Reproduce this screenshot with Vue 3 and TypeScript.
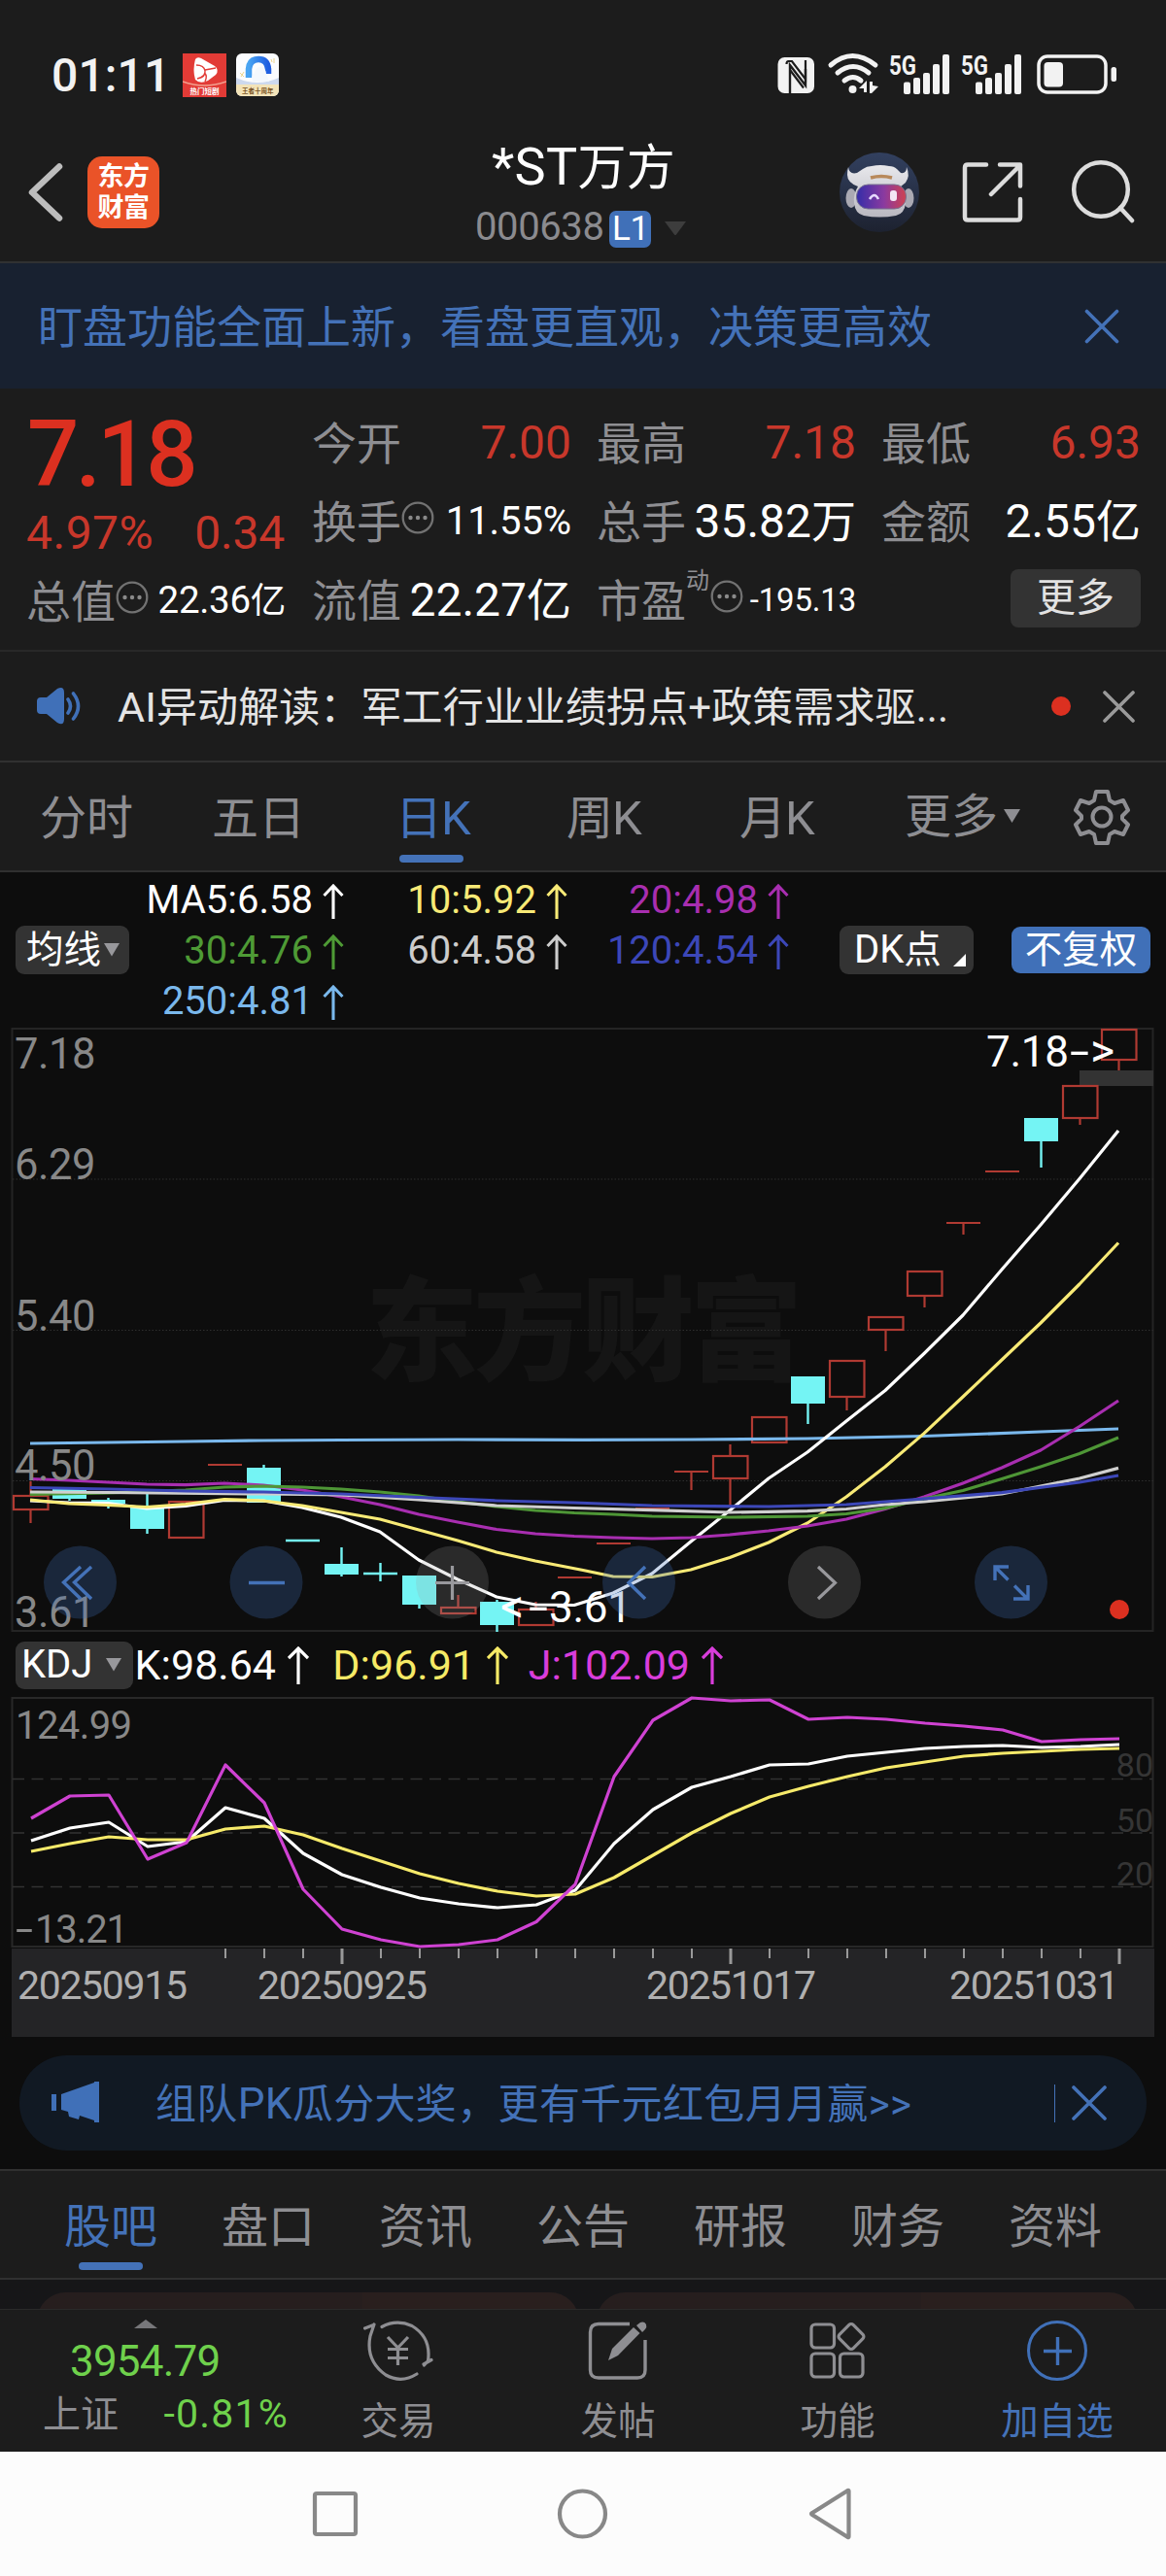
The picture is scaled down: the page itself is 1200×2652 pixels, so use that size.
<script setup lang="ts">
interface Candle {
  x: number
  kind: 'up' | 'down'
  top: number
  bottom: number
  high: number
  low: number
}

// open/close box and high/low wick per session, in chart units
const sessions: ['u' | 'd', number, number, number, number][] = [
  ['u', 1540, 1554, 1525, 1568],
  ['d', 1533, 1543, 1533, 1545],
  ['d', 1544, 1548, 1542, 1553],
  ['d', 1551, 1574, 1538, 1579],
  ['u', 1546, 1583, 1546, 1583],
  ['u', 1508, 1508, 1508, 1508],
  ['d', 1511, 1547, 1508, 1547],
  ['d', 1586, 1586, 1586, 1586],
  ['d', 1610, 1621, 1593, 1623],
  ['d', 1620, 1620, 1609, 1628],
  ['d', 1622, 1652, 1622, 1656],
  ['u', 1655, 1661, 1642, 1661],
  ['d', 1649, 1673, 1647, 1680],
  ['u', 1657, 1673, 1649, 1673],
  ['u', 1624, 1624, 1624, 1624],
  ['u', 1589, 1589, 1589, 1589],
  ['u', 1553, 1553, 1553, 1553],
  ['u', 1515, 1515, 1515, 1534],
  ['u', 1499, 1522, 1487, 1551],
  ['u', 1459, 1485, 1459, 1485],
  ['d', 1417, 1445, 1417, 1466],
  ['u', 1401, 1438, 1401, 1452],
  ['u', 1356, 1369, 1356, 1391],
  ['u', 1309, 1334, 1309, 1346],
  ['u', 1259, 1259, 1259, 1271],
  ['u', 1206, 1206, 1206, 1206],
  ['d', 1151, 1175, 1151, 1202],
  ['u', 1118, 1151, 1118, 1158],
  ['u', 1060, 1091, 1060, 1102],
]
const candles: Candle[] = sessions.map(([k, top, bottom, high, low], i) => ({
  x: 31.5 + i * 40,
  kind: k === 'u' ? 'up' : 'down',
  top,
  bottom,
  high,
  low,
}))

const maLines: { color: string; points: string }[] = [
  { color: '#7ab8ec', points: '31,1486 111,1485 191,1484 271,1483 351,1482.5 471,1482 600,1482.3 711,1482 831,1481 951,1478.5 1071,1474 1151,1471' },
  { color: '#ffffff', points: '31,1545 71,1547 111,1547.5 151,1553 191,1550.5 231,1544.5 271,1545 311,1552 351,1562 391,1577 431,1606 471,1626 511,1644 551,1652 591,1652.5 631,1640 671,1620 711,1587 751,1555 791,1522 831,1495 871,1463 911,1431.5 951,1393.5 991,1354 1031,1307 1071,1261 1111,1213.5 1151,1164' },
  { color: '#f8ea76', points: '31,1544 71,1548 111,1549.5 151,1551.5 191,1548.5 231,1543.5 271,1545 311,1550 351,1557 391,1564 431,1575 471,1586 511,1598 551,1607 600,1616.5 631,1623 671,1623.5 711,1616 751,1603.5 791,1588 831,1568 871,1541 911,1510 951,1475.6 991,1438 1031,1400 1071,1362 1111,1322 1151,1279.5' },
  { color: '#a82eb0', points: '31,1522.5 71,1524 111,1526 151,1528 191,1528.7 231,1527 271,1529 311,1534 351,1541 391,1549 431,1559 471,1567 511,1574.5 551,1579 591,1581.5 631,1583 671,1584 711,1583 751,1580 791,1576 831,1571 871,1564 911,1553.5 951,1541 991,1527 1031,1511 1071,1493 1111,1468.5 1151,1442' },
  { color: '#4e9636', points: '31,1538.5 111,1537 191,1534 231,1531 271,1530 311,1531 351,1533 391,1536 431,1540 471,1546 511,1551 551,1555 591,1557.5 631,1559 671,1561 751,1562 831,1561 871,1558.5 911,1552.6 951,1543 991,1534.5 1031,1522.5 1071,1510 1111,1496.6 1151,1480' },
  { color: '#cfcfcf', points: '31,1536 111,1536.5 271,1538 351,1539 431,1544 511,1550 591,1552.5 671,1554.7 751,1557 831,1555.6 871,1553.5 911,1549 951,1546 1031,1538 1111,1522 1151,1511.4' },
  { color: '#3c47b8', points: '31,1531.5 111,1533 191,1535 271,1536 351,1538 431,1541.5 511,1545 591,1547 671,1550 791,1551 871,1549 951,1543 1031,1536.6 1111,1526 1151,1519' },
]

const toPoints = (ys: number[]) => ys.map((y, i) => `${32 + i * 40},${y}`).join(' ')
const kLine = toPoints([1895, 1882, 1876, 1901, 1896, 1861, 1872, 1908, 1930, 1943, 1954, 1960, 1964, 1961, 1946, 1898, 1863, 1840, 1829, 1817, 1816, 1808, 1804, 1800, 1798, 1797, 1799, 1798, 1796])
const dLine = toPoints([1906, 1898, 1891, 1894, 1894, 1883, 1880, 1889, 1903, 1916, 1929, 1939, 1947, 1952, 1950, 1933, 1910, 1887, 1867, 1850, 1839, 1829, 1820, 1814, 1808, 1805, 1803, 1801, 1800])
const jLine = toPoints([1872, 1849, 1848, 1914, 1897, 1817, 1856, 1945, 1986, 1997, 2004, 2002, 1997, 1978.5, 1940, 1829, 1771, 1748, 1751, 1750, 1770, 1768, 1770, 1774, 1777, 1781, 1793, 1791, 1790])

const ticks = Array.from({ length: 24 }, (_, i) => ({ x: 232 + i * 40, major: (i + 5) % 10 === 8 }))
const priceLabels = [
  { t: '7.18', y: 1100 },
  { t: '6.29', y: 1214 },
  { t: '5.40', y: 1370 },
  { t: '4.50', y: 1524 },
  { t: '3.61', y: 1675 },
]
const dates = [
  { t: '20250915', x: 18 },
  { t: '20250925', x: 265 },
  { t: '20251017', x: 665 },
  { t: '20251031', x: 977 },
]
const maValues = [
  { t: 'MA5:6.58', c: '#ffffff' },
  { t: '10:5.92', c: '#f8ea76' },
  { t: '20:4.98', c: '#a82eb0' },
  { t: '30:4.76', c: '#4e9a35' },
  { t: '60:4.58', c: '#cccccc' },
  { t: '120:4.54', c: '#3c47b8' },
  { t: '250:4.81', c: '#7ab8ec' },
]
const kdj = [
  { t: 'K:98.64', c: '#ffffff', w: 178 },
  { t: 'D:96.91', c: '#f6ea66', w: 182 },
  { t: 'J:102.09', c: '#d93ddb', w: 198 },
]
const infoTabs = ['股吧', '盘口', '资讯', '公告', '研报', '财务', '资料']
</script>

<template>
  <div class="screen">
    <div class="status">
      <span class="time">01:11</span>
      <svg class="app1" width="45" height="45" viewBox="0 0 45 45">
        <rect width="45" height="45" fill="#e23b36" />
        <path d="M13 6q2-3 6-1l14 8q5 4 1 9l-8 6q-8 4-13-1-3-10 0-21z" fill="#fff" />
        <path d="M14 12q8 0 9 6t-8 8M23 17l11-2M22 20q4 2 1 9" fill="none" stroke="#e23b36" stroke-width="1.4" />
        <path d="M0 29q22 8 45 0" fill="none" stroke="#f3a08e" stroke-width="1.4" />
        <text x="7.5" y="42" font-size="7.5" fill="#fff" font-weight="700">热门短剧</text>
      </svg>
      <svg class="app2" width="44" height="44" viewBox="0 0 44 44">
        <defs>
          <linearGradient id="arch" x1="0" x2="1"><stop offset="0" stop-color="#48a4f2" /><stop offset="1" stop-color="#1f5ee0" /></linearGradient>
          <clipPath id="r2"><rect width="44" height="44" rx="6" /></clipPath>
        </defs>
        <g clip-path="url(#r2)">
          <rect width="44" height="44" fill="#fbfcfe" />
          <path d="M0 25q22 10 44 0v8H0z" fill="#cdd9ee" />
          <rect y="32" width="44" height="12" fill="#f3e3b8" />
          <path d="M13 25v-9q1-10 10-10t10 10v5" fill="none" stroke="url(#arch)" stroke-width="6.5" />
          <path d="M17 29q-2-7 2-9 1-7 7-6 5 2 5 7l3 8z" fill="#f4f8fd" />
          <path d="M36 6l1 3M39 5v5M4 20l4 4M8 19l-3 5" stroke="#ecd58e" stroke-width="1" />
          <text x="6" y="40.500" font-size="6.500" fill="#7a5426" font-weight="700">王者十周年</text>
        </g>
      </svg>
      <svg class="sys" width="360" height="58" viewBox="796 44 360 58">
        <g fill="#f2f2f2">
          <rect x="800.500" y="59" width="37.500" height="37" rx="7" />
          <path d="M813 96V67l16 21V71" fill="none" stroke="#1c1c1c" stroke-width="2.400" />
          <path d="M809.500 92V63.500M825.500 59v9" fill="none" stroke="#1c1c1c" stroke-width="0" />
          <path d="M813 72l14 18.500M809.500 66q0-3 2-3l3.500 0 14 18.500V62" fill="none" stroke="#1c1c1c" stroke-width="2.200" />
          <path d="M855 67q22-19 46 0M862 75q16-13 32 0M869 83q9-7 17 0" fill="none" stroke="#f2f2f2" stroke-width="5" stroke-linecap="round" />
          <circle cx="877.500" cy="92" r="4" />
          <path d="M884 91l8-8v12h-3v-4zM895 84h3v4l6 1-7 7h-2z" />
          <g v-for="dx in [0, 74]" :key="dx" :transform="`translate(${dx} 0)`">
            <text x="915" y="77" font-size="27" font-weight="700" textLength="28" lengthAdjust="spacingAndGlyphs" class="num">5G</text>
            <rect x="930" y="84.500" width="7" height="12.500" rx="2" />
            <rect x="940" y="80" width="7" height="17" rx="2" />
            <rect x="950" y="75" width="7" height="22" rx="2" />
            <rect x="960" y="66" width="7" height="31" rx="2" />
            <rect x="970" y="56" width="7" height="41" rx="2" />
          </g>
          <rect x="1069" y="58" width="69" height="37" rx="9" fill="none" stroke="#f2f2f2" stroke-width="3.500" />
          <rect x="1074.500" y="64" width="19.500" height="25.500" rx="4" />
          <rect x="1143.500" y="69" width="5.500" height="15" rx="2.500" />
        </g>
      </svg>
    </div>

    <header class="header">
      <svg class="back" width="40" height="64" viewBox="26 166 40 64"><path d="M61 171.500L33 198l28 26.500" fill="none" stroke="#bdbdbd" stroke-width="6.500" stroke-linecap="round" stroke-linejoin="round" /></svg>
      <div class="logo"><span>东方</span><span>财富</span></div>
      <div class="title">
        <div class="name">*ST<span>万方</span></div>
        <div class="code">000638<b>L1</b><svg width="24" height="16" viewBox="0 0 24 16"><path d="M1 1h22L13 14.500q-1 1-2 0z" fill="#3d3d3d" /></svg></div>
      </div>
      <svg class="robot" width="82" height="82" viewBox="0 0 82 82">
        <defs>
          <linearGradient id="sky" x1="0" y1="0" x2="0" y2="1"><stop offset="0" stop-color="#32405f" /><stop offset="1" stop-color="#1d2230" /></linearGradient>
          <linearGradient id="visor" x1="0" x2="1"><stop offset="0" stop-color="#352da8" /><stop offset=".55" stop-color="#8a3aa0" /><stop offset="1" stop-color="#cf4250" /></linearGradient>
          <linearGradient id="shell" x1="0" y1="0" x2="0" y2="1"><stop offset="0" stop-color="#e8e8ec" /><stop offset="1" stop-color="#b9b8c0" /></linearGradient>
        </defs>
        <circle cx="41" cy="41" r="41" fill="url(#sky)" />
        <ellipse cx="12" cy="47" rx="5.500" ry="10" fill="#aaa9b3" /><ellipse cx="71" cy="47" rx="5.500" ry="10" fill="#aaa9b3" />
        <path d="M9 15q1 8 9 6l6-4q4-3 9-3 9-2 18 0 5 0 8 3l4 4q6 1 6-6 4 9-1 16l-5 4q6 8 5 17-1 11-10 13-17 3-33 0-9-2-10-13-1-9 4-17-11-4-11-12 0-4 1-8z" fill="url(#shell)" />
        <path d="M32 26q11-3 22 0" stroke="#b8895c" stroke-width="3.500" fill="none" />
        <rect x="17.500" y="33" width="51" height="25" rx="12" fill="url(#visor)" stroke="#77718f" />
        <path d="M31 48q5-8 9 0" fill="none" stroke="#e7d9ff" stroke-width="2.500" /><rect x="52" y="39" width="7" height="11" rx="3" fill="#f3e7f5" />
      </svg>
      <svg class="share" width="64" height="64" viewBox="990 166 64 64"><path d="M1015 169.500h-19q-3 0-3 3v51q0 3 3 3h51q3 0 3-3v-18.500M1029 169.500h21v22M1049 171l-29 29" fill="none" stroke="#dcdcdc" stroke-width="4.500" stroke-linecap="round" stroke-linejoin="round" /></svg>
      <svg class="search" width="66" height="66" viewBox="1102 164 66 66"><circle cx="1133" cy="195" r="27.800" fill="none" stroke="#dcdcdc" stroke-width="4.500" /><path d="M1153 214l12 13" stroke="#dcdcdc" stroke-width="4.500" stroke-linecap="round" /></svg>
    </header>

    <div class="notice">
      <span>盯盘功能全面上新，看盘更直观，决策更高效</span>
      <svg width="36" height="36" viewBox="0 0 36 36"><path d="M2.500 2.500l31 31M33.500 2.500l-31 31" stroke="#4472b8" stroke-width="3.600" stroke-linecap="round" /></svg>
    </div>

    <section class="quote">
      <div class="col first">
        <div class="price">7.18</div>
        <div class="pct"><span>4.97%</span><span>0.34</span></div>
        <div class="cell"><label>总值</label><svg class="dots"><use href="#dots" /></svg><span class="v mid cap">22.36<i>亿</i></span></div>
      </div>
      <div class="col">
        <div class="cell"><label>今开</label><span class="v red">7.00</span></div>
        <div class="cell"><label>换手</label><svg class="dots"><use href="#dots" /></svg><span class="v mid">11.55%</span></div>
        <div class="cell"><label>流值</label><span class="v">22.27<i>亿</i></span></div>
      </div>
      <div class="col">
        <div class="cell"><label>最高</label><span class="v red">7.18</span></div>
        <div class="cell"><label>总手</label><span class="v">35.82<i>万</i></span></div>
        <div class="cell"><label>市盈</label><sup>动</sup><svg class="dots"><use href="#dots" /></svg><span class="v small">-195.13</span></div>
      </div>
      <div class="col">
        <div class="cell"><label>最低</label><span class="v red">6.93</span></div>
        <div class="cell"><label>金额</label><span class="v">2.55<i>亿</i></span></div>
        <div class="cell"><button class="more">更多</button></div>
      </div>
      <svg width="0" height="0" class="defs"><symbol id="dots" viewBox="0 0 34 34"><circle cx="17" cy="17" r="15.300" fill="none" stroke="#727272" stroke-width="2.300" /><g fill="#8a8a8a"><circle cx="9.500" cy="17" r="2.200" /><circle cx="17" cy="17" r="2.200" /><circle cx="24.500" cy="17" r="2.200" /></g></symbol></svg>
    </section>

    <div class="ai">
      <svg width="48" height="40" viewBox="36 707 48 40"><path d="M38 722q0-4 4-4h6l11-9q7-3 7 4v27q0 8-7 4l-11-9h-6q-4 0-4-4z" fill="#4070b8" /><path d="M70 720q5 7 0 14M75.500 714q10 13 0 26" fill="none" stroke="#4070b8" stroke-width="3.600" stroke-linecap="round" /></svg>
      <p><span class="lat">AI</span>异动解读：军工行业业绩拐点+政策需求驱...</p>
      <i class="dot"></i>
      <svg width="33" height="33" viewBox="0 0 33 33"><path d="M2 2l29 29M31 2L2 31" stroke="#9a9a9a" stroke-width="3.600" stroke-linecap="round" /></svg>
    </div>

    <nav class="periods">
      <span class="p1">分时</span><span class="p2">五日</span><span class="p3 on">日<em>K</em></span><span class="p4">周<em>K</em></span><span class="p5">月<em>K</em></span><span class="p6">更多<svg width="18" height="15" viewBox="0 0 18 15"><path d="M0 0h17L8.500 14z" fill="#8e8e92" /></svg></span>
      <svg class="gear" width="58" height="58" viewBox="0 0 58 58">
        <g fill="none" stroke="#8e8e92" stroke-width="4"><path d="M23 3h12l2 9 5 3 9-3 5 10-6 6v3l6 6-5 10-9-3-5 3-2 9H23l-2-9-5-3-9 3-5-10 6-6v-3l-6-6 5-10 9 3 5-3z" stroke-linejoin="round" /><circle cx="29" cy="29" r="9.500" /></g>
      </svg>
    </nav>

    <section class="chart">
      <div class="legend">
        <button class="pill ma">均线<svg width="16" height="14" viewBox="0 0 16 14"><path d="M0 0h16L8 13.500z" fill="#98989c" /></svg></button>
        <div class="values">
          <span v-for="m in maValues" :key="m.t" :style="{ color: m.c }">{{ m.t }}<svg width="22" height="37" viewBox="0 0 22 37"><path d="M11 36V2M1.500 12L11 2l9.500 10" fill="none" stroke="currentColor" stroke-width="3.100" /></svg></span>
        </div>
        <button class="pill dk"><span>DK</span>点<svg width="13" height="13" viewBox="0 0 13 13"><path d="M13 0v13H0z" fill="#fff" /></svg></button>
        <button class="pill adj">不复权</button>
      </div>

      <svg class="kline" width="1200" height="626" viewBox="0 1057 1200 626">
        <text x="376" y="1412" font-size="116" font-weight="900" fill="#151515" textLength="450">东方财富</text>
        <rect x="12.500" y="1059" width="1174" height="620" fill="none" stroke="#242424" stroke-width="2" />
        <g stroke="#2e2e2e" stroke-width="1" stroke-dasharray="1.500 2"><path d="M13 1214h1174M13 1369.500h1174M13 1524.500h1174" /></g>
        <rect x="1111" y="1102" width="76" height="16" fill="#333" />
        <g v-for="c in candles" :key="c.x" :class="c.kind">
          <template v-if="c.bottom === c.top">
            <path class="wick" :d="`M${c.x - 17.5} ${c.top}h35M${c.x} ${c.high}V${c.low}`" />
          </template>
          <template v-else>
            <path class="wick" :d="`M${c.x} ${c.high}V${c.top}M${c.x} ${c.bottom}V${c.low}`" />
            <rect v-if="c.kind === 'up'" :x="c.x - 17.5" :y="c.top" width="35.500" :height="c.bottom - c.top" />
            <rect v-else :x="c.x - 17.5" :y="c.top" width="35" :height="c.bottom - c.top" />
          </template>
        </g>
        <polyline v-for="l in maLines" :key="l.color" :points="l.points" :stroke="l.color" fill="none" stroke-width="3.200" stroke-linejoin="round" />
        <text v-for="p in priceLabels" :key="p.t" x="15" :y="p.y" class="num" font-size="43.500" fill="#888" textLength="83.500">{{ p.t }}</text>
        <text y="1098" class="num" font-size="44" fill="#fff"><tspan x="1015" textLength="85">7.18</tspan><tspan x="1101" textLength="20" lengthAdjust="spacingAndGlyphs">-</tspan><tspan x="1122" font-size="48">&gt;</tspan></text>
        <text y="1670" class="num" font-size="44" fill="#fff"><tspan x="515" font-size="48">&lt;</tspan><tspan x="544" textLength="20" lengthAdjust="spacingAndGlyphs">-</tspan><tspan x="565" textLength="85">3.61</tspan></text>
        <g fill="rgba(64,112,184,.27)"><circle cx="82.500" cy="1629" r="37.500" /><circle cx="274" cy="1629" r="37.500" /><circle cx="657.500" cy="1629" r="37.500" /><circle cx="1040.500" cy="1629" r="37.500" /></g>
        <g fill="rgba(160,160,160,.2)"><circle cx="465.500" cy="1629" r="37.500" /><circle cx="848.500" cy="1629" r="37.500" /></g>
        <g fill="none" stroke="#4472b8" stroke-width="3.400"><path d="M83 1613l-17.500 16L83 1646M94 1613l-17.500 16L94 1646M256 1629.500h37M664 1613l-17 16.500 17 16.500" /><path d="M1024 1627v-14h14M1024 1613l13.500 13.500M1058 1632v14h-15M1057 1645.500l-13-13" /></g>
        <g fill="none" stroke="#98989c" stroke-width="3.200"><path d="M448 1629.500h35M465.500 1612v35M842 1613l17.500 16.500L842 1646" /></g>
        <circle cx="1152" cy="1657" r="10" fill="#dc3020" />
      </svg>

      <div class="kdj">
        <button class="pill kd"><span>KDJ</span><svg width="16" height="14" viewBox="0 0 16 14"><path d="M0 0h16L8 13.500z" fill="#98989c" /></svg></button>
        <span v-for="k in kdj" :key="k.t" class="kv" :style="{ color: k.c, width: k.w + 'px' }">{{ k.t }}<svg width="22" height="39" viewBox="0 0 22 39"><path d="M11 39V2M1 12L11 2l10 10" fill="none" stroke="currentColor" stroke-width="3.200" /></svg></span>
      </div>

      <svg class="osc" width="1200" height="354" viewBox="0 1745 1200 354">
        <rect x="12" y="2006" width="1176" height="91" fill="#242426" />
        <rect x="12.500" y="1748" width="1174" height="256" fill="none" stroke="#282828" stroke-width="2" />
        <g stroke="#333" stroke-width="1.300" stroke-dasharray="12 7.500"><path d="M13 1831.500h1173M13 1887h1173M13 1942.500h1173" /></g>
        <g class="num" font-size="34" fill="#353535" text-anchor="end"><text x="1187" y="1829">80</text><text x="1187" y="1885.500">50</text><text x="1187" y="1941">20</text></g>
        <g class="num" font-size="40" fill="#888"><text x="16" y="1789.500" textLength="120">124.99</text><text y="1999.500"><tspan x="16" textLength="18" lengthAdjust="spacingAndGlyphs">-</tspan><tspan x="36" textLength="96">13.21</tspan></text></g>
        <g fill="none" stroke-width="3.200" stroke-linejoin="round">
          <polyline :points="kLine" stroke="#fff" /><polyline :points="dLine" stroke="#f6ea6a" /><polyline :points="jLine" stroke="#cf42d2" />
        </g>
        <rect v-for="t in ticks" :key="t.x" :x="t.x - (t.major ? 1.5 : 1)" y="2006" :width="t.major ? 3 : 2" :height="t.major ? 16 : 10" fill="#999" />
        <text v-for="d in dates" :key="d.t" :x="d.x" y="2057.500" class="num" font-size="41" fill="#b0b0b0" textLength="175">{{ d.t }}</text>
      </svg>

      <div class="promo">
        <svg class="horn" width="50" height="46" viewBox="53 2143 50 46"><path d="M53 2157h5v17h-5zM63 2157l34-12v-1h5v42h-5v-2l-15-5-1 4-10-3-1-5-7-2z" fill="#4070b8" /></svg>
        <p>组队<span>PK</span>瓜分大奖，更有千元红包月月赢&gt;&gt;</p>
        <i></i>
        <svg class="x" width="36" height="36" viewBox="0 0 36 36"><path d="M2 2l32 32M34 2L2 34" stroke="#4472b8" stroke-width="3.600" stroke-linecap="round" /></svg>
      </div>
    </section>

    <nav class="info"><span v-for="(t, i) in infoTabs" :key="t" :class="{ on: i === 0 }">{{ t }}</span></nav>
    <div class="peek"><div></div><div></div></div>

    <footer class="bar">
      <div class="index">
        <svg width="24" height="9" viewBox="0 0 24 9"><path d="M0 9L12 0l12 9z" fill="#77777a" /></svg>
        <div class="pts">3954.79</div>
        <div class="chg"><label>上证</label><span>-0.81%</span></div>
      </div>
      <div class="act">
        <svg width="72" height="64" viewBox="375 2388 72 64"><g fill="none" stroke="#8e8e92" stroke-width="3.200" stroke-linecap="round" stroke-linejoin="round"><path d="M394 2395.500q15-8 31-1 20 12 16.500 36l-4 4.500M437 2434l8-4.500M430 2444q-16 10-32 1-21-15-16-40l4-12M376.500 2397l9-3.500" /><path d="M400 2406l10.500 11 10.500-11M410.500 2417v18M400 2418.500h21M400 2427.500h21" stroke-linecap="butt" /></g></svg>
        <span>交易</span>
      </div>
      <div class="act">
        <svg width="64" height="64" viewBox="604 2388 64 64"><path d="M648 2392.500h-32q-8.500 0-8.500 8.500v39q0 8 8.500 8h40q8 0 8-8v-31" fill="none" stroke="#8e8e92" stroke-width="3.400" /><path d="M626 2430l4-12 22-22 6.500 6-22.500 23zM655 2394l4-3q4-1.500 6 2 1 3-1 5l-3 3z" fill="#8e8e92" /></svg>
        <span>发帖</span>
      </div>
      <div class="act">
        <svg width="64" height="64" viewBox="830 2388 64 64"><g fill="none" stroke="#8e8e92" stroke-width="3.200"><rect x="835" y="2393" width="23.500" height="24" rx="4" /><rect x="835" y="2423" width="23.500" height="24" rx="4" /><rect x="864.500" y="2423" width="23.500" height="24" rx="4" /><rect x="866" y="2395.500" width="20" height="20" rx="3" transform="rotate(45 876 2405.500)" /></g></svg>
        <span>功能</span>
      </div>
      <div class="act on">
        <svg width="64" height="64" viewBox="1055 2388 64 64"><circle cx="1087" cy="2420" r="29.500" fill="none" stroke="#4070b8" stroke-width="3" /><path d="M1073 2420.500h29M1087.500 2406v29" stroke="#4070b8" stroke-width="3.400" /></svg>
        <span>加自选</span>
      </div>
    </footer>

    <div class="android">
      <svg width="1200" height="128" viewBox="0 2524 1200 128"><g fill="none" stroke="#888" stroke-width="4.200" stroke-linejoin="round"><rect x="324" y="2567" width="42" height="42" rx="2" /><circle cx="599.500" cy="2588" r="23.500" /><path d="M873.500 2564.500v47q0 1-1 .5L836 2589q-2-1 0-2l36.500-23q1-.5 1 .5z" /></g></svg>
    </div>
  </div>
</template>

<style>
body { margin: 0; background: #0d0d0d; }
</style>

<style scoped>
.screen { width: 1200px; height: 2652px; overflow: hidden; background: #1c1c1c; font-family: Roboto, 'Noto Sans CJK SC', sans-serif; color: #fff; display: flex; flex-direction: column; }
.screen * { box-sizing: border-box; }
.screen svg { display: block; flex: none; }
.num { font-family: Roboto, sans-serif; }
button { font: inherit; border: 0; padding: 0; color: inherit; }
p { margin: 0; white-space: nowrap; }
label { display: block; }

.status { height: 135px; flex: none; display: flex; align-items: flex-start; padding: 54px 44px 0 53px; }
.time { width: 135px; font-size: 48px; font-weight: 500; line-height: 48px; color: #f2f2f2; letter-spacing: .1px; }
.app1 { margin-top: 1px; }
.app2 { margin: 1px 0 0 10px; }
.sys { margin: -10px 0 0 auto; }

.header { height: 136px; flex: none; display: flex; align-items: flex-start; padding-left: 26px; border-bottom: 2px solid #303132; }
.back { margin-top: 31px; }
.logo { width: 74px; height: 74px; margin: 26px 0 0 24px; background: #ea5328; border-radius: 15px; display: flex; flex-direction: column; align-items: center; padding-top: 5px; font-size: 27px; line-height: 32px; font-weight: 700; letter-spacing: -.5px; }
.title { margin-left: 322px; width: 240px; padding-top: 0; }
.name { font-size: 54px; line-height: 74px; padding-left: 20px; white-space: nowrap; letter-spacing: .3px; }
.name span { font-size: 50px; }
.code { display: flex; align-items: center; height: 44px; margin-top: 2px; margin-left: 3px; font-size: 40px; line-height: 44px; color: #8b8b8f; letter-spacing: -.4px; }
.code b { width: 43px; height: 38px; margin: 4px 13px 0 6px; background: #4070b8; border-radius: 7px; color: #fff; font-size: 35px; line-height: 37px; font-weight: 400; text-align: center; }
.code svg { margin-top: 2px; }
.robot { margin: 22px 0 0 138px; }
.share { margin: 31px 0 0 44px; }
.search { margin: 29px 0 0 48px; }

.notice { height: 129px; flex: none; background: #182130; display: flex; align-items: center; justify-content: space-between; padding: 0 48px 0 39px; color: #4472b8; font-size: 46px; line-height: 60px; }
.notice span { padding-top: 3px; }

.quote { height: 271px; flex: none; display: flex; padding: 15px 25px 0 27px; border-bottom: 2px solid #282828; }
.col { width: 267px; margin-left: 27px; flex: none; }
.col.first { width: 267px; margin-left: 0; }
.col + .col + .col { margin-left: 26px; }
.defs { position: absolute; }
.price { height: 103px; line-height: 106px; font-size: 94px; font-weight: 500; color: #dc3020; letter-spacing: -3.600px; padding-left: 1px; }
.pct { height: 61px; line-height: 61px; display: flex; justify-content: space-between; font-size: 48px; color: #c8372b; padding-right: 1px; letter-spacing: .5px; }
.pct span:last-child { letter-spacing: -.2px; }
.cell { height: 81px; display: flex; align-items: center; line-height: 80px; white-space: nowrap; }
.first .cell { height: 78px; }
.cell label { font-size: 46px; color: #8e8e92; padding-top: 3px; }
.v { margin-left: auto; font-size: 48px; }
.v i { font-style: normal; font-size: 46px; }
.v.red { color: #c8372b; }
.v.mid { font-size: 40px; letter-spacing: -.1px; }
.v.mid.cap { font-size: 38.500px; letter-spacing: -.3px; }
.v.mid i { font-size: 36.500px; }
.v.small { font-size: 33px; letter-spacing: -.2px; padding-top: 0; }
.dots { width: 34px; height: 34px; margin-bottom: 7px; }
.cell sup { font-size: 24px; line-height: 24px; color: #8e8e92; align-self: flex-start; margin: 9px 1px 0 0; }
.more { margin-left: auto; margin-bottom: 3px; width: 134px; height: 60px; background: #333; border-radius: 8px; font-size: 40px; line-height: 58px; color: #e2e2e2; }

.ai { height: 114px; flex: none; display: flex; align-items: center; padding: 0 32px 0 36px; border-bottom: 2px solid #303030; }
.ai p { width: 880px; margin-left: 37px; font-size: 42px; line-height: 60px; color: #e4e4e4; padding-top: 2px; letter-spacing: .1px; }
.ai .lat { font-size: 43px; }
.dot { width: 20px; height: 20px; border-radius: 50%; background: #dc3020; margin-left: 81px; margin-right: auto; }

.periods { height: 113px; flex: none; position: relative; display: flex; align-items: flex-start; padding: 0 37px 0 41px; font-size: 48px; line-height: 115px; color: #8e8e92; border-bottom: 2px solid #303030; }
.periods em { font-style: normal; font-size: 49px; margin-left: -1px; }
.periods span { white-space: nowrap; height: 111px; }
.p1 { width: 177px; }
.p2 { width: 189px; }
.p3 { width: 176px; }
.p4 { width: 178px; }
.p5 { width: 170px; }
.p6 { display: flex; align-items: center; }
.p6 svg { margin-left: 6px; }
.periods .on { position: relative; color: #4472b8; }
.periods .on::after { content: ''; position: absolute; left: 4px; bottom: 8px; width: 66px; height: 8px; border-radius: 4px; background: #4472b8; }
.gear { margin: 27px 0 0 auto; }

.chart { height: 1335px; flex: none; background: #0d0d0d; display: flex; flex-direction: column; }
.legend { height: 159px; flex: none; display: flex; align-items: center; padding: 0 16px; }
.pill { background: #333; border-radius: 9px; font-size: 38.500px; display: flex; align-items: center; height: 50px; line-height: 50px; flex: none; white-space: nowrap; }
.ma { width: 117px; padding-left: 11px; }
.ma svg { margin-left: 3px; }
.values { width: 680px; height: 159px; display: grid; grid-template-columns: 221px 230px 228px; grid-template-rows: 52px 52px 52px; padding-top: 3px; font-size: 40px; line-height: 50px; }
.values span { display: flex; justify-content: flex-end; align-items: center; white-space: nowrap; letter-spacing: 0; }
.values svg { margin: 2px 0 0 10px; }
.dk { width: 138px; margin-left: 51px; padding-left: 15px; }
.dk span { font-size: 40px; }
.dk svg { margin: 22px 0 0 12px; }
.adj { width: 143px; height: 48px; line-height: 48px; margin-left: auto; background: #4070b8; justify-content: center; }

.kline { overflow: visible; }
.up .wick { fill: none; stroke: #b03a32; stroke-width: 2.200; }
.up rect { fill: none; stroke: #b03a32; stroke-width: 2.200; }
.down .wick { fill: none; stroke: #74f4f4; stroke-width: 2.400; }
.down rect { fill: #74f4f4; }

.kdj { height: 62px; flex: none; display: flex; align-items: center; padding-left: 16px; font-size: 43px; }
.kd { width: 121px; height: 49px; padding-left: 6px; margin-right: 3px; font-size: 40px; }
.kd svg { margin-left: 14px; }
.kv { display: flex; align-items: center; justify-content: flex-end; letter-spacing: 0; white-space: nowrap; }
.kv svg { margin-left: 12px; }
.kv + .kv { margin-left: 23px; }

.promo { width: 1160px; height: 98px; margin: 17px 0 0 20px; border-radius: 49px; background: #111923; display: flex; align-items: center; color: #4472b8; font-size: 42px; line-height: 60px; padding-left: 33px; }
.promo p { margin-left: 57px; width: 925px; padding-top: 2px; letter-spacing: .350px; }
.promo p span { font-size: 44px; }
.promo i { width: 1px; height: 39px; background: #4472b8; margin-right: 17px; }

.info { height: 114px; flex: none; display: flex; padding-left: 33px; border-top: 2px solid #303030; border-bottom: 2px solid #303030; font-size: 48px; line-height: 115px; color: #8e8e92; }
.info span { width: 162px; text-align: center; position: relative; }
.info .on { color: #4472b8; }
.info .on::after { content: ''; position: absolute; left: 48px; bottom: 8px; width: 66px; height: 8px; border-radius: 4px; background: #4472b8; }
.peek { height: 30px; flex: none; background: #161618; display: flex; gap: 18px; padding: 13px 29px 0 38px; overflow: hidden; }
.peek div { flex: 1; height: 80px; border-radius: 30px; background: linear-gradient(90deg, #261e1e 60%, #291f1e 60%); }

.bar { height: 147px; flex: none; border-top: 1px solid #2a2a2a; display: flex; }
.index { width: 297px; padding-top: 10px; flex: none; }
.index svg { margin-left: 138px; }
.pts { font-size: 44px; line-height: 50px; margin: 9px 0 0 72px; color: #6fd14c; letter-spacing: -.8px; }
.chg { display: flex; align-items: center; justify-content: space-between; margin-left: 44px; line-height: 56px; font-size: 41px; color: #6fd14c; letter-spacing: 1.200px; }
.chg label { color: #8e8e92; font-size: 39px; padding-top: 2px; letter-spacing: 0; }
.act { width: 226px; display: flex; flex-direction: column; align-items: center; padding-top: 10px; color: #8e8e92; font-size: 38.500px; line-height: 60px; flex: none; }
.act span { margin-top: 11px; }
.act.on { color: #4472b8; }
.android { height: 128px; flex: none; background: #fcfcfc; }
</style>
